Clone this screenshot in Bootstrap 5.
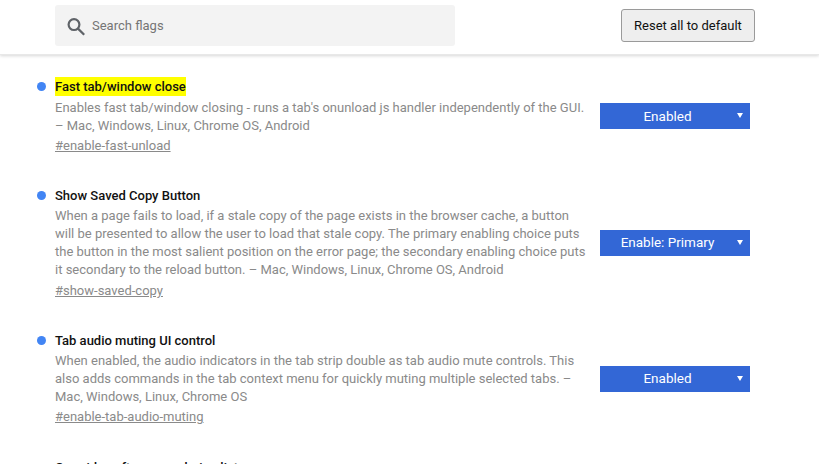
<!DOCTYPE html>
<html lang="en">
<head>
<meta charset="utf-8">
<title>Flags</title>
<link href="https://cdn.jsdelivr.net/npm/bootstrap@5.3.0/dist/css/bootstrap.min.css" rel="stylesheet">
<style>
html,body{height:464px;overflow:hidden;background:#fff}
body{font-family:Roboto,"Liberation Sans",sans-serif;font-size:13px;color:#5a5a5a}
.flag-head{height:55px;padding:5px 64px 0 55px;box-shadow:0 1px 3px rgba(0,0,0,.16);border-bottom:1px solid #e8e8e8}
.flag-search{width:400px;height:41px;background:#f3f3f3;border-radius:3px;padding-left:11px;gap:6px;font-size:13px;color:#757575}
.flag-search svg{flex:none}
.flag-reset{width:134px;height:33px;margin-top:4px;padding:0;background:#eee;border:1px solid #9a9a9a;border-radius:3px;color:#111;font-size:13px}
.flag-reset:hover{background:#e4e4e4;border-color:#9a9a9a;color:#111}
.flag-list{padding:22px 69px 0 37px}
.flag-row{margin-bottom:32px}
.flag-row-tight{margin-bottom:31px}
.flag-dot{width:9px;height:9px;border-radius:50%;background:#4285f4;margin:5px 9px 0 0;flex:none}
.flag-dot-off{background:transparent}
.flag-body{width:532px;flex:none;line-height:18px;color:#8a8a8a}
.flag-title{display:inline-block;font-weight:500;color:#111;font-size:13px;line-height:19px;margin-bottom:2px}
.flag-hit{background:#ff0;margin-bottom:3px}
.flag-link{display:block;margin-top:1px;color:#8a8a8a;text-decoration:underline;line-height:19px}
.flag-link-low{margin-top:2px}
.flag-pick{width:150px;height:26px;margin-left:13px;padding-right:15px;background:#3367d6;color:#fff;font-size:13.5px;position:relative;flex:none}
.flag-pick-up{margin-bottom:1px}
.flag-arrow{position:absolute;right:7px;top:10px;width:0;height:0;border-left:3px solid transparent;border-right:3px solid transparent;border-top:5px solid #fff}
</style>
</head>
<body>
<header class="flag-head d-flex justify-content-between align-items-start">
  <div class="flag-search d-flex align-items-center">
    <svg width="20" height="20" viewBox="0 0 20 20" fill="none" stroke="#5f6368" stroke-width="2.2"><circle cx="8" cy="8.6" r="5.4"/><path d="M12 12.6 L18.2 18.8"/></svg>
    <span>Search flags</span>
  </div>
  <button type="button" class="btn flag-reset">Reset all to default</button>
</header>
<main class="flag-list">
  <section class="flag-row flag-row-tight d-flex align-items-center">
    <div class="flag-dot align-self-start"></div>
    <div class="flag-body">
      <span class="flag-title flag-hit">Fast tab/window close</span><br>
      Enables fast tab/window closing - runs a tab's onunload js handler independently of the GUI. – Mac, Windows, Linux, Chrome OS, Android
      <a class="flag-link" href="#">#enable-fast-unload</a>
    </div>
    <div class="flag-pick d-flex align-items-center justify-content-center">Enabled<i class="flag-arrow"></i></div>
  </section>
  <section class="flag-row flag-row-tight d-flex align-items-center">
    <div class="flag-dot align-self-start"></div>
    <div class="flag-body">
      <span class="flag-title">Show Saved Copy Button</span><br>
      When a page fails to load, if a stale copy of the page exists in the browser cache, a button will be presented to allow the user to load that stale copy. The primary enabling choice puts the button in the most salient position on the error page; the secondary enabling choice puts it secondary to the reload button. – Mac, Windows, Linux, Chrome OS, Android
      <a class="flag-link flag-link-low" href="#">#show-saved-copy</a>
    </div>
    <div class="flag-pick flag-pick-up d-flex align-items-center justify-content-center">Enable: Primary<i class="flag-arrow"></i></div>
  </section>
  <section class="flag-row d-flex align-items-center">
    <div class="flag-dot align-self-start"></div>
    <div class="flag-body">
      <span class="flag-title">Tab audio muting UI control</span><br>
      When enabled, the audio indicators in the tab strip double as tab audio mute controls. This also adds commands in the tab context menu for quickly muting multiple selected tabs. – Mac, Windows, Linux, Chrome OS
      <a class="flag-link" href="#">#enable-tab-audio-muting</a>
    </div>
    <div class="flag-pick d-flex align-items-center justify-content-center">Enabled<i class="flag-arrow"></i></div>
  </section>
  <section class="flag-row d-flex align-items-center">
    <div class="flag-dot flag-dot-off align-self-start"></div>
    <div class="flag-body"><span class="flag-title">Override software rendering list</span></div>
  </section>
</main>
</body>
</html>
